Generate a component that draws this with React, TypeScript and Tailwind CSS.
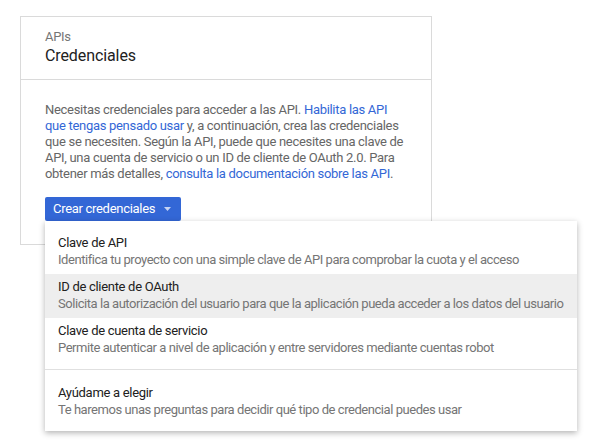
const items = [
  {
    title: 'Clave de API',
    desc: 'Identifica tu proyecto con una simple clave de API para comprobar la cuota y el acceso',
  },
  {
    title: 'ID de cliente de OAuth',
    desc: 'Solicita la autorización del usuario para que la aplicación pueda acceder a los datos del usuario',
    active: true,
  },
  {
    title: 'Clave de cuenta de servicio',
    desc: 'Permite autenticar a nivel de aplicación y entre servidores mediante cuentas robot',
  },
];

function MenuItem({ title, desc, active }: { title: string; desc: string; active?: boolean }) {
  return (
    <div className={`px-[13px] pt-[5px] pb-[6px] ${active ? 'bg-[#eeeeee]' : ''}`}>
      <div className="text-[13px] leading-[16px] text-[#212121]">{title}</div>
      <div className="text-[13px] leading-[17px] tracking-[-0.45px] whitespace-nowrap text-[#757575]">
        {desc}
      </div>
    </div>
  );
}

export default function App() {
  return (
    <div className="min-h-[447px] w-[592px] bg-white pt-[16px] pl-[20px] font-['Roboto',sans-serif] tracking-[-0.3px]">
      <div className="w-[412px] border border-[#dadada] bg-white">
        <div className="border-b border-[#dadada] px-[24px] pt-[12px] pb-[12px]">
          <div className="text-[13px] leading-[16px] text-[#757575]">APIs</div>
          <div className="text-[16px] leading-[22px] tracking-[-0.1px] text-[#212121]">Credenciales</div>
        </div>

        <div className="px-[24px] pt-[22px] pb-[23px]">
          <p className="text-[13px] leading-[16px] text-[#666666]">
            Necesitas credenciales para acceder a las API.{' '}
            <span className="text-[#3367d6]">Habilita las API que tengas pensado usar</span> y, a
            continuación, crea las credenciales que se necesiten. Según la API, puede que necesites
            una clave de API, una cuenta de servicio o un ID de cliente de OAuth 2.0. Para obtener
            más detalles,{' '}
            <span className="text-[#3367d6]">consulta la documentación sobre las API</span>.
          </p>

          <div className="relative mt-[15px]">
            <button className="flex h-[24px] items-center gap-[9px] rounded-[2px] bg-[#3367d6] pr-[10px] pl-[8px] text-[13px] text-white">
              Crear credenciales
              <svg width="7" height="4" viewBox="0 0 7 4">
                <path d="M0 0h7L3.5 4z" fill="#c6d4f3" />
              </svg>
            </button>

            <div className="absolute top-[24px] left-0 z-10 w-[532px] bg-white pt-[9px] pb-[7px] shadow-[0_2px_6px_rgba(0,0,0,0.3)]">
              {items.map((item) => (
                <MenuItem key={item.title} {...item} />
              ))}
              <div className="mt-[7px] border-t border-[#e0e0e0] pt-[10px]">
                <MenuItem
                  title="Ayúdame a elegir"
                  desc="Te haremos unas preguntas para decidir qué tipo de credencial puedes usar"
                />
              </div>
            </div>
          </div>
        </div>
      </div>
    </div>
  );
}
